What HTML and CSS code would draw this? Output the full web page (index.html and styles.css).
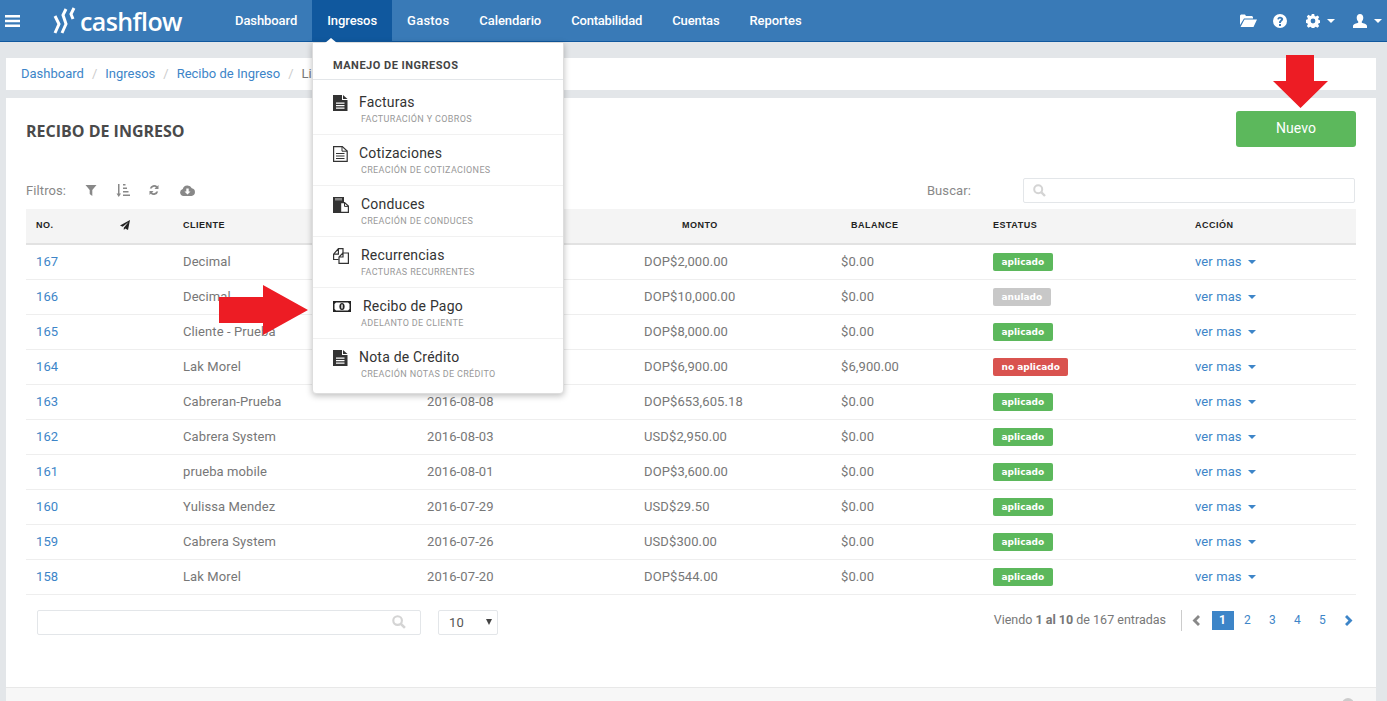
FILE: index.html
```html
<!DOCTYPE html>
<html lang="es">
<head>
<meta charset="utf-8">
<title>Recibo de Ingreso</title>
<link rel="stylesheet" href="styles.css">
</head>
<body>
<header class="nav">
  <svg class="burger" width="15" height="12" viewBox="0 0 15 12"><path d="M0 0h15v2.400H0zM0 4.800h15v2.400H0zM0 9.600h15V12H0z" fill="#fff"/></svg>
  <div class="logo">
    <svg width="23" height="27" viewBox="0 0 23 27"><path d="M2 9L6 17 2 26M13 2L10 8 13 17 9 26M21 1L18 7 20 12" fill="none" stroke="#fff" stroke-width="3"/></svg>
    <span>cashflow</span>
  </div>
  <nav class="menu">
    <a class="menu-item">Dashboard</a>
    <a class="menu-item active">Ingresos</a>
    <a class="menu-item">Gastos</a>
    <a class="menu-item">Calendario</a>
    <a class="menu-item">Contabilidad</a>
    <a class="menu-item">Cuentas</a>
    <a class="menu-item">Reportes</a>
  </nav>
  <div class="tools">
    <svg class="tool-folder" width="17" height="13" viewBox="0 0 17 13"><path d="M0 11V1.500L1 .5h4l1 1.500h6l1 1v1.500H4L0 11zM4.500 5.500H17L13.500 13H0.500z" fill="#fff"/></svg>
    <svg class="tool-help" width="14" height="14" viewBox="0 0 14 14"><path fill-rule="evenodd" d="M7 0a7 7 0 1 1 0 14A7 7 0 0 1 7 0zM6 10v2h2v-2zM4.300 5.200l1.700.4C6.200 4.800 6.500 4.500 7 4.500c.6 0 1 .3 1 .8 0 .9-2 1.200-2 3.200v.5h2v-.4c0-1.100 2.200-1.500 2.200-3.500C10.200 3.700 8.800 2.700 7 2.700c-1.600 0-2.400.9-2.700 2.500z" fill="#fff"/></svg>
    <span class="tool-group">
      <svg width="14" height="14" viewBox="0 0 14 14"><path fill-rule="evenodd" d="M5.800 0h2.400l.4 2 1.200.5 1.700-1.100 1.700 1.700-1.100 1.700.5 1.200 2 .4v2.400l-2 .4-.5 1.200 1.100 1.700-1.700 1.700-1.700-1.100-1.200.5-.4 2H5.800l-.4-2-1.200-.5-1.700 1.100-1.700-1.700 1.100-1.700-.5-1.200-2-.4V5.800l2-.4.5-1.200-1.100-1.700 1.700-1.700 1.700 1.100 1.200-.5zM7 4.600a2.400 2.400 0 1 0 0 4.800 2.400 2.400 0 0 0 0-4.800z" fill="#fff"/></svg>
      <i class="caret white"></i>
    </span>
    <span class="tool-group">
      <svg width="14" height="14" viewBox="0 0 14 14"><path d="M7 0c2 0 3.300 1.500 3.300 3.700 0 1.500-.7 3-1.500 3.800v1.300c1.500.8 5.200 1 5.200 3.400V14H0v-1.800c0-2.400 3.700-2.600 5.200-3.400V7.500c-.8-.8-1.500-2.300-1.500-3.800C3.700 1.500 5 0 7 0z" fill="#fff"/></svg>
      <i class="caret white"></i>
    </span>
  </div>
</header>

<main class="page">
  <ol class="crumbs">
    <li><a>Dashboard</a></li>
    <li class="sep">/</li>
    <li><a>Ingresos</a></li>
    <li class="sep">/</li>
    <li><a>Recibo de Ingreso</a></li>
    <li class="sep">/</li>
    <li>Listado</li>
  </ol>

  <section class="panel">
    <div class="panel-body">
      <div class="title-row">
        <h1>RECIBO DE INGRESO</h1>
        <a class="btn-new">Nuevo</a>
      </div>
      <div class="filter-row">
        <span class="filter-label">Filtros:</span>
        <svg class="fi fi-1" width="12" height="11" viewBox="0 0 11 11"><path d="M0 0h11L6.800 5v6L4.200 9V5z" fill="#888"/></svg>
        <svg class="fi fi-2" width="14" height="13" viewBox="0 0 14 13"><path d="M2 0h1.500v9.500H5L2.750 13 .5 9.500H2zM7 0h2.500v1.500H7zM7 3.500h4v1.500H7zM7 7h5.500v1.500H7zM7 10.500h7V12H7z" fill="#888"/></svg>
        <svg class="fi fi-3" width="12" height="12" viewBox="0 0 12 12"><path d="M1.800 4.500A4.500 4.500 0 0 1 9.300 2.300L10.500 1v4h-4l1.400-1.400a2.600 2.600 0 0 0-4.200.900zM10.200 7.500A4.500 4.500 0 0 1 2.700 9.700L1.500 11V7h4L4.100 8.400a2.600 2.600 0 0 0 4.200-.9z" fill="#888"/></svg>
        <svg class="fi fi-4" width="15" height="11" viewBox="0 0 15 11"><path fill-rule="evenodd" d="M3.500 11A3.500 3.500 0 0 1 2.800 4.100 4.800 4.800 0 0 1 11.800 3.300 3.900 3.900 0 0 1 11.500 11zM6.300 3.500v3H4.500l3 3 3-3H8.700v-3z" fill="#888"/></svg>
        <span class="search-label">Buscar:</span>
        <div class="search-box">
          <svg width="13" height="13" viewBox="0 0 13 13"><circle cx="5.200" cy="5.200" r="4" fill="none" stroke="#d4d4d4" stroke-width="2"/><path d="M8.200 8.200l3.800 3.800" stroke="#d4d4d4" stroke-width="2.400"/></svg>
        </div>
      </div>

      <table class="grid">
        <colgroup>
          <col class="c1"><col class="c2"><col class="c3"><col class="c4"><col class="c5"><col class="c6"><col class="c7"><col class="c8">
        </colgroup>
        <thead>
          <tr>
            <th>NO.</th>
            <th><svg width="10" height="10" viewBox="0 0 10 10"><path d="M10 0L8 10 5.200 8.600 3.800 10V7.800L8.500 2 2.700 6.800 0 5.500z" fill="#222"/></svg></th>
            <th>CLIENTE</th>
            <th>FECHA</th>
            <th class="h-monto">MONTO</th>
            <th class="h-balance">BALANCE</th>
            <th class="h-status">ESTATUS</th>
            <th>ACCIÓN</th>
          </tr>
        </thead>
        <tbody>
          <tr><td><a>167</a></td><td></td><td>Decimal</td><td>2016-08-12</td><td>DOP$2,000.00</td><td>$0.00</td><td><span class="tag ok">aplicado</span></td><td><a class="more">ver mas <i class="caret blue"></i></a></td></tr>
          <tr><td><a>166</a></td><td></td><td>Decimal</td><td>2016-08-11</td><td>DOP$10,000.00</td><td>$0.00</td><td><span class="tag void">anulado</span></td><td><a class="more">ver mas <i class="caret blue"></i></a></td></tr>
          <tr><td><a>165</a></td><td></td><td>Cliente - Prueba</td><td>2016-08-10</td><td>DOP$8,000.00</td><td>$0.00</td><td><span class="tag ok">aplicado</span></td><td><a class="more">ver mas <i class="caret blue"></i></a></td></tr>
          <tr><td><a>164</a></td><td></td><td>Lak Morel</td><td>2016-08-09</td><td>DOP$6,900.00</td><td>$6,900.00</td><td><span class="tag no">no aplicado</span></td><td><a class="more">ver mas <i class="caret blue"></i></a></td></tr>
          <tr><td><a>163</a></td><td></td><td>Cabreran-Prueba</td><td>2016-08-08</td><td>DOP$653,605.18</td><td>$0.00</td><td><span class="tag ok">aplicado</span></td><td><a class="more">ver mas <i class="caret blue"></i></a></td></tr>
          <tr><td><a>162</a></td><td></td><td>Cabrera System</td><td>2016-08-03</td><td>USD$2,950.00</td><td>$0.00</td><td><span class="tag ok">aplicado</span></td><td><a class="more">ver mas <i class="caret blue"></i></a></td></tr>
          <tr><td><a>161</a></td><td></td><td>prueba mobile</td><td>2016-08-01</td><td>DOP$3,600.00</td><td>$0.00</td><td><span class="tag ok">aplicado</span></td><td><a class="more">ver mas <i class="caret blue"></i></a></td></tr>
          <tr><td><a>160</a></td><td></td><td>Yulissa Mendez</td><td>2016-07-29</td><td>USD$29.50</td><td>$0.00</td><td><span class="tag ok">aplicado</span></td><td><a class="more">ver mas <i class="caret blue"></i></a></td></tr>
          <tr><td><a>159</a></td><td></td><td>Cabrera System</td><td>2016-07-26</td><td>USD$300.00</td><td>$0.00</td><td><span class="tag ok">aplicado</span></td><td><a class="more">ver mas <i class="caret blue"></i></a></td></tr>
          <tr><td><a>158</a></td><td></td><td>Lak Morel</td><td>2016-07-20</td><td>DOP$544.00</td><td>$0.00</td><td><span class="tag ok">aplicado</span></td><td><a class="more">ver mas <i class="caret blue"></i></a></td></tr>
        </tbody>
      </table>

      <div class="table-foot">
        <div class="foot-search">
          <svg width="14" height="14" viewBox="0 0 13 13"><circle cx="5.200" cy="5.200" r="4" fill="none" stroke="#d4d4d4" stroke-width="2"/><path d="M8.200 8.200l3.800 3.800" stroke="#d4d4d4" stroke-width="2.400"/></svg>
        </div>
        <div class="page-size"><span>10</span><i class="tri"></i></div>
        <div class="info">Viendo <b>1 al 10</b> de 167 entradas</div>
        <div class="pager">
          <svg class="chev" width="8" height="11" viewBox="0 0 8 11"><path d="M6 0l2 2-3.500 3.500L8 9l-2 2L.5 5.500z" fill="#888"/></svg>
          <span class="pg current">1</span><span class="pg">2</span><span class="pg">3</span><span class="pg">4</span><span class="pg">5</span>
          <svg class="chev" width="8" height="11" viewBox="0 0 8 11"><path d="M2 0L0 2l3.500 3.500L0 9l2 2 5.500-5.500z" fill="#3d85c8"/></svg>
        </div>
      </div>
    </div>
    <div class="panel-foot"><i class="dot"></i></div>
  </section>
</main>

<div class="dropdown">
  <i class="notch"></i>
  <div class="dd-head">MANEJO DE INGRESOS</div>
  <a class="dd-item">
    <svg class="dd-icon" width="15" height="16" viewBox="0 0 15 16"><path fill-rule="evenodd" d="M0 0h9v5h5.500v11H0zM10 0l4.500 4H10zM3 7.500v1.200h8.500V7.500zM3 10v1.200h8.500V10zM3 12.500v1.200h8.500v-1.200z" fill="#333"/></svg>
    <span class="dd-text"><span class="dd-title">Facturas</span><span class="dd-sub">FACTURACIÓN Y COBROS</span></span>
  </a>
  <a class="dd-item">
    <svg class="dd-icon" width="15" height="16" viewBox="0 0 15 16"><path d="M.6.600h8.700l4.900 4.400v10.400H.6z" fill="none" stroke="#333" stroke-width="1.200"/><path d="M9 .600v4.600h5M3 7.500h8.500M3 10h8.500M3 12.500h8.500" fill="none" stroke="#333"/></svg>
    <span class="dd-text"><span class="dd-title">Cotizaciones</span><span class="dd-sub">CREACIÓN DE COTIZACIONES</span></span>
  </a>
  <a class="dd-item">
    <svg class="dd-icon" width="16" height="16" viewBox="0 0 16 16"><path d="M0 0h11v5H7v11H0z" fill="#333"/><path d="M2 1h7v2.500H2z" fill="#888"/><path d="M7.600 5.600h4l3.800 3.500v6.300H7.600z" fill="#fff" stroke="#333" stroke-width="1.200"/><path d="M11.500 5.600v3.800h3.800" fill="none" stroke="#333"/></svg>
    <span class="dd-text shift-2"><span class="dd-title">Conduces</span><span class="dd-sub sub-flush">CREACIÓN DE CONDUCES</span></span>
  </a>
  <a class="dd-item">
    <svg class="dd-icon" width="16" height="16" viewBox="0 0 16 16"><path d="M5.600 11.500H.6V6.200L5.400.6h4.600v4.500M5.400.6v5.600H.6" fill="none" stroke="#333" stroke-width="1.200"/><path d="M10 5L6 9v6.400h9.400V5zM10 5v4H6" fill="#fff" stroke="#333" stroke-width="1.200"/></svg>
    <span class="dd-text shift-2"><span class="dd-title">Recurrencias</span><span class="dd-sub sub-flush">FACTURAS RECURRENTES</span></span>
  </a>
  <a class="dd-item">
    <svg class="dd-icon icon-note" width="18" height="11" viewBox="0 0 18 11"><path d="M0 0h18v11H0z" fill="#222"/><path d="M3 1.500h12l1.500 1.500v5L15 9.500H3L1.500 8V3z" fill="#fff"/><ellipse cx="9" cy="5.500" rx="2.600" ry="3.500" fill="#222"/><path d="M8.300 3.500h1.400v4H8.300z" fill="#fff"/></svg>
    <span class="dd-text shift-4"><span class="dd-title">Recibo de Pago</span><span class="dd-sub sub-back">ADELANTO DE CLIENTE</span></span>
  </a>
  <a class="dd-item">
    <svg class="dd-icon" width="15" height="16" viewBox="0 0 15 16"><path fill-rule="evenodd" d="M0 0h9v5h5.500v11H0zM10 0l4.500 4H10zM3 7.500v1.200h8.500V7.500zM3 10v1.200h8.500V10zM3 12.500v1.200h8.500v-1.200z" fill="#333"/></svg>
    <span class="dd-text"><span class="dd-title">Nota de Crédito</span><span class="dd-sub">CREACIÓN NOTAS DE CRÉDITO</span></span>
  </a>
</div>

<svg class="arrow arrow-down" width="55" height="53" viewBox="0 0 55 53"><path d="M13 0h28v26h14L27.500 53 0 26h13z" fill="#ed1c24"/></svg>
<svg class="arrow arrow-right" width="90" height="50" viewBox="0 0 90 50"><path d="M0 12h44V0l45 25-45 25V38H0z" fill="#ed1c24"/></svg>
</body>
</html>
```
FILE: styles.css
```css
* { box-sizing: border-box; }
html, body { margin: 0; height: 701px; overflow: hidden; }
body { background: #e3e6e9; font-family: Roboto, "Liberation Sans", sans-serif; font-size: 13px; letter-spacing: .1px; color: #777; }
a { color: #3d85c8; text-decoration: none; }

.nav { height: 42px; background: #397ab7; border-bottom: 1px solid #10589e; display: flex; align-items: center; color: #fff; }
.burger { margin-left: 5px; }
.logo { display: flex; align-items: center; margin-left: 33px; width: 167px; gap: 4px; }
.logo span { font-family: "Open Sans", sans-serif; font-size: 25px; font-weight: 600; line-height: 30px; letter-spacing: -.6px; color: #fff; }
.menu { display: flex; height: 41px; }
.menu-item { display: flex; align-items: center; padding: 0 15px; color: #fff; font-size: 13px; font-weight: 500; letter-spacing: -.08px; }
.menu-item:nth-child(3) { letter-spacing: .25px; }
.menu-item:nth-child(5) { letter-spacing: -.2px; }
.menu-item.active { background: #10589e; }
.tools { margin-left: auto; display: flex; align-items: center; gap: 18px; padding-right: 5px; }
.tool-folder { margin-right: -2px; }
.tool-help { margin-right: 1px; }
.tool-group { display: flex; align-items: center; gap: 7px; }
.caret { display: inline-block; width: 0; height: 0; border-left: 4px solid transparent; border-right: 4px solid transparent; border-top: 4px solid; }
.caret.white { border-top-color: #fff; }
.caret.blue { border-top-color: #3d85c8; margin-left: 3px; vertical-align: 2px; }

.page { padding: 16px 11px 0 6px; }
.crumbs { list-style: none; margin: 0; padding: 0 15px 2px; height: 32px; background: #fff; display: flex; align-items: center; gap: 8px; letter-spacing: 0; color: #777; }
.crumbs .sep { color: #ccc; }
.panel { margin-top: 8px; height: 603px; background: #fff; display: flex; flex-direction: column; }
.panel-body { flex: 1; padding: 13px 20px 0; }
.title-row { display: flex; justify-content: space-between; align-items: center; height: 36px; }
.title-row h1 { margin: 0; padding-top: 4px; font-size: 16px; font-weight: 700; letter-spacing: 0; color: #4a4a4a; font-family: "Open Sans", sans-serif; }
.btn-new { width: 120px; height: 36px; padding-bottom: 2px; background: #5cb85c; border-radius: 3px; color: #fff; display: flex; align-items: center; justify-content: center; font-size: 14px; }

.filter-row { display: flex; align-items: center; height: 26px; margin-top: 30px; }
.filter-label { color: #888; }
.fi { flex: none; }
.fi-1 { margin-left: 19px; }
.fi-2 { margin-left: 19px; }
.fi-3 { margin-left: 18px; }
.fi-4 { margin-left: 20px; }
.search-label { margin-left: auto; color: #888; }
.search-box { margin: 0 1px 0 52px; width: 332px; height: 25px; border: 1px solid #e3e6e9; border-radius: 2px; display: flex; align-items: center; padding-left: 9px; }

.grid { width: 100%; table-layout: fixed; border-collapse: collapse; margin-top: 6px; }
.c1 { width: 84px; } .c2 { width: 63px; } .c3 { width: 244px; } .c4 { width: 217px; } .c5 { width: 197px; } .c6 { width: 152px; } .c7 { width: 202px; } .c8 { width: 171px; }
.grid th { height: 35px; background: #f4f4f4; border-bottom: 2px solid #e2e2e2; text-align: left; padding: 0 0 2px 10px; font-size: 9px; font-weight: 700; letter-spacing: .5px; color: #222; font-family: "Liberation Sans", sans-serif; }
.grid th svg { display: block; }
.grid th.h-monto { padding-left: 48px; }
.grid th.h-balance { padding-left: 20px; }
.grid td { height: 35px; padding: 0 0 0 10px; border-bottom: 1px solid #eee; color: #777; }
.tag { display: inline-block; height: 18px; line-height: 18px; padding: 0 8.500px; border-radius: 2px; color: #fff; font-family: "DejaVu Sans", sans-serif; font-size: 9px; font-weight: 700; letter-spacing: 0; vertical-align: middle; }
.tag.ok { background: #5cb85c; }
.tag.void { background: #c8c8c8; }
.tag.no { background: #d9534f; }

.table-foot { display: flex; align-items: flex-start; padding: 15px 0 0 11px; height: 56px; }
.foot-search { width: 384px; height: 25px; border: 1px solid #e3e6e9; border-radius: 2px; display: flex; align-items: center; justify-content: flex-end; padding-right: 14px; }
.page-size { margin-left: 17px; width: 60px; height: 25px; border: 1px solid #e3e6e9; border-radius: 2px; display: flex; align-items: center; justify-content: space-between; padding: 0 5px 0 10px; color: #555; }
.tri { width: 0; height: 0; border-left: 3px solid transparent; border-right: 3px solid transparent; border-top: 6px solid #444; }
.info { margin-left: auto; font-size: 12.500px; line-height: 20px; letter-spacing: 0; color: #777; }
.pager { margin-left: 15px; border-left: 1px solid #ccc; height: 21px; display: flex; align-items: center; padding: 0 3px 0 10px; font-size: 12px; }
.pg { width: 22px; height: 19px; margin: 0 1.500px; display: flex; align-items: center; justify-content: center; color: #3d85c8; }
.pg.current { background: #3d85c8; color: #fff; font-weight: 700; }
.chev { margin: 0 10px 0 0; }
.pg + .chev { margin: 0 0 0 10px; }

.panel-foot { height: 14px; background: #f7f7f7; border-top: 1px solid #e8e8e8; position: relative; overflow: hidden; }
.dot { position: absolute; right: 22px; top: 10px; width: 12px; height: 12px; border-radius: 50%; background: #ccc; }

.dropdown { position: absolute; left: 312px; top: 42px; width: 252px; height: 352px; background: #fff; border: 1px solid #ddd; border-radius: 0 0 4px 4px; box-shadow: 0 2px 6px rgba(0,0,0,.25); }
.notch { position: absolute; left: 12px; top: -5px; width: 0; height: 0; border-left: 6px solid transparent; border-right: 6px solid transparent; border-bottom: 5px solid #fff; }
.dd-head { height: 37px; border-bottom: 1px solid #e3e6e9; padding: 17px 0 0 20px; font-size: 11px; line-height: 12px; font-weight: 700; color: #444; letter-spacing: .5px; }
.dd-item { display: flex; height: 51px; padding: 10px 0 0 20px; border-bottom: 1px solid #f1f1f1; color: #333; }
.dd-head + .dd-item { height: 55px; padding-top: 14px; }
.dd-item:last-child { border-bottom: 0; }
.dd-icon { flex: none; margin-top: 1px; }
.icon-note { margin-top: 3px; }
.dd-text { display: flex; flex-direction: column; margin-left: 11px; }
.dd-text.shift-2 { margin-left: 12px; }
.dd-text.shift-4 { margin-left: 12px; }
.dd-title { font-size: 14px; line-height: 16px; letter-spacing: .2px; color: #333; }
.dd-sub { font-size: 9px; line-height: 11px; letter-spacing: .35px; margin: 4px 0 0 2px; color: #999; }
.dd-sub.sub-flush { margin-left: 0; }
.dd-sub.sub-back { margin-left: -2px; }

.arrow { position: absolute; }
.arrow-down { left: 1273px; top: 55px; }
.arrow-right { left: 219px; top: 285px; }
```
